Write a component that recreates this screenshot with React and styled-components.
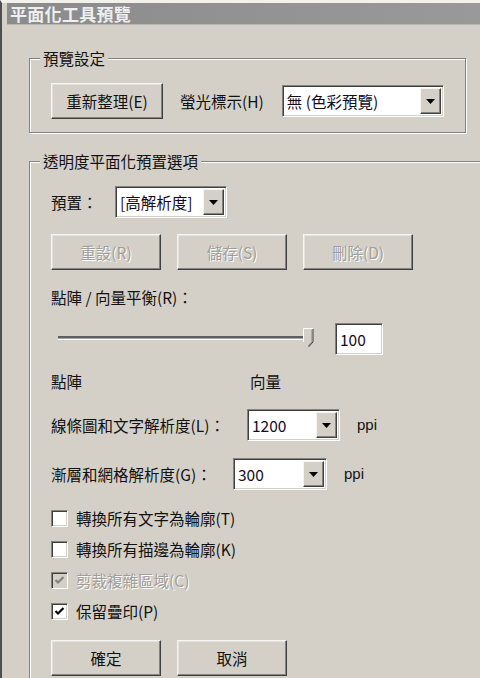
import React from 'react';
import styled, { createGlobalStyle } from 'styled-components';

const GlobalStyle = createGlobalStyle`
  html, body {
    margin: 0;
    padding: 0;
    background: #d4d0c8;
  }
  body {
    font-family: "Noto Sans CJK TC", "Microsoft JhengHei", "Liberation Sans", sans-serif;
    font-size: 15px;
    color: #111;
  }
`;

const Frame = styled.div`
  width: 480px;
  height: 678px;
  box-sizing: border-box;
  border-top: 3px solid #f2f1ec;
  border-left: 2px solid #4e4e4e;
  overflow: hidden;
  background: #d4d0c8;
`;

const TitleBar = styled.div`
  height: 21px;
  margin-left: 5px;
  padding-left: 3px;
  background: linear-gradient(to right, #8b8b8b, #999999);
  border-bottom: 1px solid #b8b6b0;
  color: #efefef;
  font-weight: 700;
  font-size: 17px;
  line-height: 21px;
  letter-spacing: 0.3px;
`;

const Content = styled.div`
  padding-left: 27px;
`;

const Group = styled.div`
  position: relative;
  width: 437px;
  border: 1px solid #85837e;
  box-shadow: inset 1px 1px 0 #fff, 1px 1px 0 #fff;
  margin-top: ${(p) => p.$top}px;
  padding: 24px 0 ${(p) => p.$bottom}px 21px;
  height: ${(p) => (p.$height ? `${p.$height}px` : 'auto')};
  box-sizing: ${(p) => (p.$height ? 'content-box' : 'border-box')};
`;

const Caption = styled.span`
  position: absolute;
  top: -10px;
  left: 10px;
  padding: 0 3px;
  background: #d4d0c8;
  line-height: 18px;
  font-size: 15.5px;
`;

const Row = styled.div`
  display: flex;
  align-items: center;
  gap: ${(p) => p.$gap || 0}px;
  margin-top: ${(p) => p.$mt || 0}px;
`;

const Label = styled.span`
  line-height: 20px;
  white-space: nowrap;
  font-size: 15.5px;
  width: ${(p) => (p.$w ? `${p.$w}px` : 'auto')};
  margin: 0 ${(p) => p.$mr || 0}px 0 ${(p) => p.$ml || 0}px;
  flex: none;
`;

const Button = styled.button`
  width: ${(p) => p.$w || 110}px;
  height: 36px;
  flex: none;
  padding: 0;
  font-family: inherit;
  font-size: 15.5px;
  background: #d4d0c8;
  color: ${(p) => (p.disabled ? '#a09e99' : '#111')};
  text-shadow: ${(p) => (p.disabled ? '1px 1px 0 #fff' : 'none')};
  border: 1px solid;
  border-color: #f6f5f2 #404040 #404040 #f6f5f2;
  box-shadow: inset -1px -1px 0 #85837e, inset 1px 1px 0 #e4e2dd;
`;

const Sunken = styled.div`
  box-sizing: border-box;
  flex: none;
  display: flex;
  align-items: stretch;
  width: ${(p) => p.$w}px;
  height: 32px;
  margin-left: ${(p) => p.$ml || 0}px;
  border: 1px solid;
  border-color: #85837e #fff #fff #85837e;
  box-shadow: inset 1px 1px 0 #404040, inset -1px -1px 0 #d4d0c8;
  background: #fff;
  padding: 2px;
`;

const FieldText = styled.span`
  flex: 1;
  padding-left: 2px;
  line-height: 26px;
  font-size: 15.5px;
  color: #140a1e;
  white-space: nowrap;
  overflow: hidden;
`;

const DropButton = styled.span`
  width: 21px;
  flex: none;
  display: flex;
  align-items: center;
  justify-content: center;
  background: #d4d0c8;
  box-sizing: border-box;
  border: 1px solid;
  border-color: #f6f5f2 #404040 #404040 #f6f5f2;
  box-shadow: inset -1px -1px 0 #85837e;
`;

const Unit = styled.span`
  line-height: 20px;
  margin-left: 17px;
  font-family: "Liberation Sans", "Noto Sans", sans-serif;
  font-size: 15px;
  flex: none;
`;

const SliderBox = styled.div`
  position: relative;
  width: 256px;
  height: 22px;
  margin-left: 7px;
  flex: none;
`;

const Track = styled.div`
  position: absolute;
  left: 0;
  right: 5px;
  top: 8px;
  height: 4px;
  box-sizing: border-box;
  border-top: 2px solid #5e5e5e;
  border-bottom: 1px solid #fff;
  background: #a8a6a0;
`;

const Thumb = styled.svg`
  position: absolute;
  right: 0;
  top: 0;
`;

const Checks = styled.div`
  display: flex;
  flex-direction: column;
  gap: 7px;
  margin-top: 16px;
`;

const CheckRow = styled.label`
  display: flex;
  align-items: center;
  gap: 8px;
  height: 24px;
  color: ${(p) => (p.$disabled ? '#a09e99' : '#111')};
  text-shadow: ${(p) => (p.$disabled ? '1px 1px 0 #fff' : 'none')};
`;

const Box = styled.span`
  width: 17px;
  height: 17px;
  box-sizing: border-box;
  flex: none;
  display: flex;
  align-items: center;
  justify-content: center;
  border: 1px solid;
  border-color: #85837e #fff #fff #85837e;
  box-shadow: inset 1px 1px 0 #404040, inset -1px -1px 0 #d4d0c8;
  background: ${(p) => (p.$disabled ? '#d4d0c8' : '#fff')};
`;

const Arrow = () => (
  <svg width="9" height="5" viewBox="0 0 9 5">
    <path d="M0 0 H9 L4.5 5 Z" fill="#000" />
  </svg>
);

const Combo = ({ width, value }) => (
  <Sunken $w={width}>
    <FieldText>{value}</FieldText>
    <DropButton>
      <Arrow />
    </DropButton>
  </Sunken>
);

const Check = ({ checked, disabled, children }) => (
  <CheckRow $disabled={disabled}>
    <Box $disabled={disabled}>
      {checked && (
        <svg width="11" height="11" viewBox="0 0 11 11">
          <path
            d="M1.5 5 L4 7.5 L9.5 2"
            fill="none"
            stroke={disabled ? '#85837e' : '#000'}
            strokeWidth="2.2"
          />
        </svg>
      )}
    </Box>
    <Label>{children}</Label>
  </CheckRow>
);

const App = () => {
  return (
    <>
      <GlobalStyle />
      <Frame>
        <TitleBar>平面化工具預覽</TitleBar>
        <Content>
          <Group $top={33} $bottom={13}>
            <Caption>預覽設定</Caption>
            <Row>
              <Button $w={112}>重新整理(E)</Button>
              <Label $ml={17} $mr={18}>螢光標示(H)</Label>
              <Combo width={162} value="無 (色彩預覽)" />
            </Row>
          </Group>

          <Group $top={28} $bottom={0} $height={540}>
            <Caption>透明度平面化預置選項</Caption>
            <Row>
              <Label $w={64}>預置：</Label>
              <Combo width={112} value="[高解析度]" />
            </Row>
            <Row $mt={16} $gap={16}>
              <Button disabled>重設(R)</Button>
              <Button disabled>儲存(S)</Button>
              <Button disabled>刪除(D)</Button>
            </Row>
            <Row $mt={17}>
              <Label>點陣 / 向量平衡(R)：</Label>
            </Row>
            <Row $mt={16}>
              <SliderBox>
                <Track />
                <Thumb width="11" height="20" viewBox="0 0 11 20">
                  <path d="M0.5 0.5 H10 V14 L5.5 19 L0.5 14 Z" fill="#d4d0c8" />
                  <path d="M0.5 14 V0.5 H10" fill="none" stroke="#fff" />
                  <path d="M10 1 V14 L5.5 19" fill="none" stroke="#404040" />
                  <path d="M9 2 V13.6 L5.5 17.6" fill="none" stroke="#85837e" />
                </Thumb>
              </SliderBox>
              <Sunken $w={48} $ml={21}>
                <FieldText>100</FieldText>
              </Sunken>
            </Row>
            <Row $mt={16}>
              <Label $w={199}>點陣</Label>
              <Label>向量</Label>
            </Row>
            <Row $mt={18}>
              <Label $w={196}>線條圖和文字解析度(L)：</Label>
              <Combo width={93} value="1200" />
              <Unit>ppi</Unit>
            </Row>
            <Row $mt={17}>
              <Label $w={182}>漸層和網格解析度(G)：</Label>
              <Combo width={94} value="300" />
              <Unit>ppi</Unit>
            </Row>
            <Checks>
              <Check>轉換所有文字為輪廓(T)</Check>
              <Check>轉換所有描邊為輪廓(K)</Check>
              <Check checked disabled>剪裁複雜區域(C)</Check>
              <Check checked>保留疊印(P)</Check>
            </Checks>
            <Row $mt={17} $gap={16}>
              <Button>確定</Button>
              <Button>取消</Button>
            </Row>
          </Group>
        </Content>
      </Frame>
    </>
  );
};

export default App;
